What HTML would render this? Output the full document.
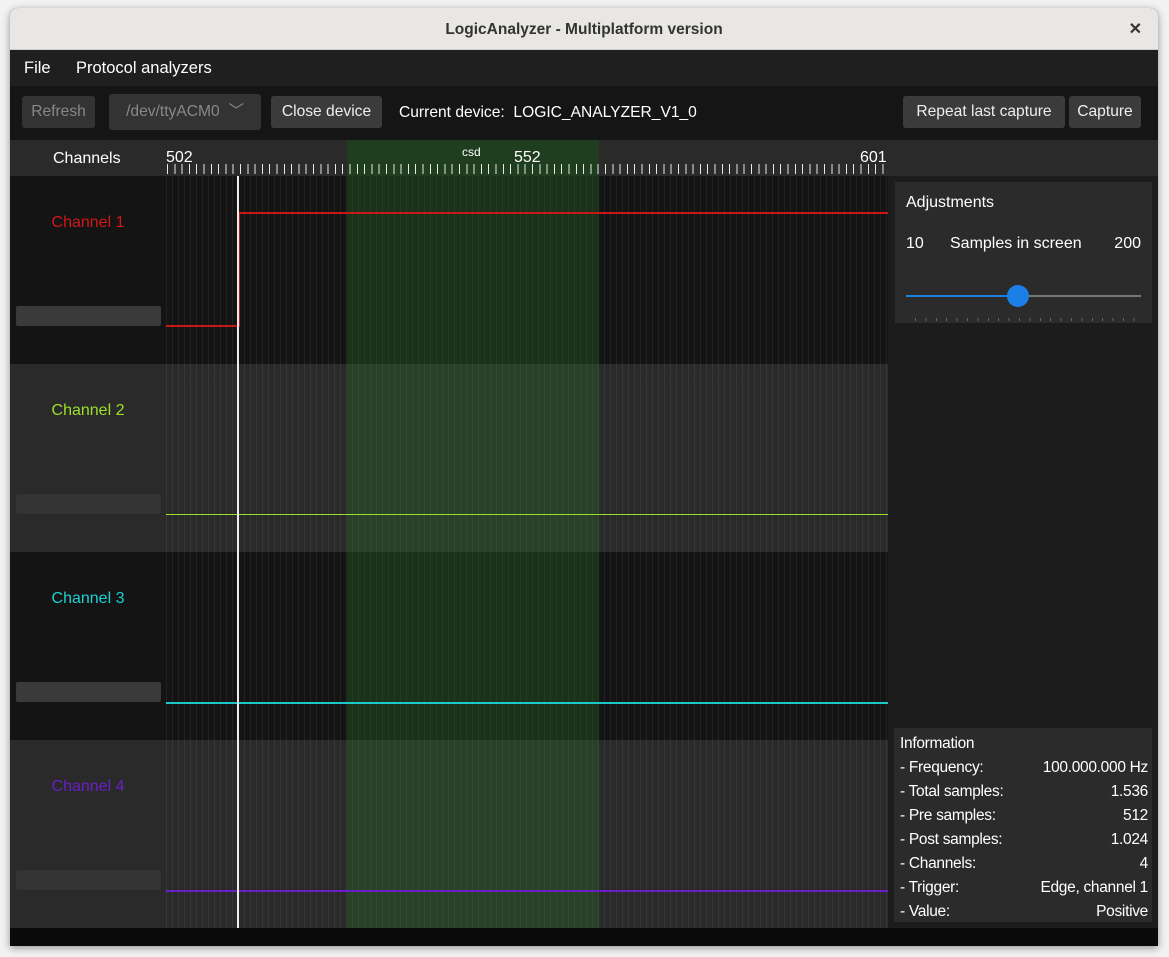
<!DOCTYPE html>
<html><head><meta charset="utf-8"><style>
*{margin:0;padding:0;box-sizing:border-box}
body{width:1169px;height:957px;background:#f2f2f2;font-family:"Liberation Sans",sans-serif;position:relative;overflow:hidden}
.abs{position:absolute}
.win{left:10px;top:8px;width:1148px;height:938px;background:#1c1c1c;border-radius:8px 8px 0 0;overflow:hidden;box-shadow:0 2px 8px rgba(0,0,0,.4)}
.title{left:0;top:0;width:1148px;height:42px;background:#e9e7e4;border-bottom:1px solid #cfcdca;text-align:center;line-height:44px;font-weight:bold;font-size:15.5px;color:#333}
.menu{top:42px;left:0;width:1148px;height:36px;background:#1f1f1f;color:#fff;font-size:16.5px}
.tb{top:78px;left:0;width:1148px;height:54px;background:#151515;color:#fff;font-size:15.6px}
.btn{background:#3b3b3b;border-radius:3px;height:32px;line-height:32px;text-align:center;color:#eee;top:10px;white-space:nowrap}
.ruler{top:132px;left:0;width:1148px;height:36px;background:#2a2a2a;color:#fff;font-size:16px}
.row{left:0;width:878px;height:188px}
.lab{left:0;width:156px;text-align:center;font-size:16px;top:38px}
.bar{left:6px;width:145px;height:20px;top:130px;background:#3a3a3a;border-radius:2px}
.grid{left:156px;top:0;width:722px;height:188px;background-image:repeating-linear-gradient(90deg,rgba(255,255,255,.06) 0 1px,transparent 1px 6px);}
.info div{display:flex;justify-content:space-between;height:24px;line-height:24px}
</style></head><body>
<div class="abs win">
 <div class="abs title">LogicAnalyzer - Multiplatform version<span class="abs" style="right:16px;top:0;font-size:16px">✕</span></div>
 <div class="abs menu"><span class="abs" style="left:14px;top:9px">File</span><span class="abs" style="left:66px;top:9px">Protocol analyzers</span></div>
 <div class="abs tb">
  <div class="abs btn" style="left:12px;width:73px;color:#888;background:#333">Refresh</div>
  <div class="abs btn" style="left:99px;width:152px;color:#888;background:#333;top:8px;height:36px;line-height:36px">/dev/ttyACM0 &nbsp;﹀</div>
  <div class="abs btn" style="left:261px;width:111px">Close device</div>
  <span class="abs" style="left:389px;top:18px">Current device:&nbsp; LOGIC_ANALYZER_V1_0</span>
  <div class="abs btn" style="left:893px;width:162px">Repeat last capture</div>
  <div class="abs btn" style="left:1059px;width:72px">Capture</div>
 </div>
 <div class="abs ruler">
  <span class="abs" style="left:43px;top:10px">Channels</span>
  <div class="abs" style="left:337px;top:0;width:252px;height:36px;background:#1f3d1f"></div>
  <span class="abs" style="left:156px;top:9px">502</span>
  <span class="abs" style="left:452px;top:5px;font-size:12px">csd</span>
  <span class="abs" style="left:504px;top:9px">552</span>
  <span class="abs" style="left:850px;top:9px">601</span>
  <div class="abs" style="left:157px;top:24px;width:721px;height:10px;background-image:repeating-linear-gradient(90deg,#e8e8e8 0 1px,transparent 1px 7.3px)"></div>
 </div>
 <div class="abs row" style="top:168px;background:#141414"><div class="abs grid"></div><div class="abs lab" style="color:#d01818">Channel 1</div><div class="abs bar"></div></div>
 <div class="abs row" style="top:356px;background:#2a2a2a"><div class="abs grid"></div><div class="abs lab" style="color:#9be02a">Channel 2</div><div class="abs bar" style="background:#333"></div></div>
 <div class="abs row" style="top:544px;background:#141414"><div class="abs grid"></div><div class="abs lab" style="color:#1fd0d0">Channel 3</div><div class="abs bar"></div></div>
 <div class="abs row" style="top:732px;background:#2a2a2a"><div class="abs grid"></div><div class="abs lab" style="color:#6a1ec8">Channel 4</div><div class="abs bar" style="background:#333"></div></div>
 <div class="abs" style="left:337px;top:168px;width:252px;height:752px;background:rgba(40,110,40,.33)"></div>
 <div class="abs" style="left:156px;top:317px;width:72px;height:2px;background:#c81818"></div>
 <div class="abs" style="left:228px;top:204px;width:2px;height:115px;background:#c81818"></div>
 <div class="abs" style="left:228px;top:204px;width:650px;height:2px;background:#c81818"></div>
 <div class="abs" style="left:156px;top:506px;width:722px;height:1px;background:#9be02a"></div>
 <div class="abs" style="left:156px;top:694px;width:722px;height:2px;background:#1fc8c8"></div>
 <div class="abs" style="left:156px;top:882px;width:722px;height:2px;background:#6a1ec8"></div>
 <div class="abs" style="left:227px;top:168px;width:2px;height:752px;background:#eee"></div>
 <div class="abs" style="left:885px;top:174px;width:257px;height:141px;background:#2b2b2b;color:#fff;font-size:16px">
  <span class="abs" style="left:11px;top:12px">Adjustments</span>
  <span class="abs" style="left:11px;top:53px">10</span>
  <span class="abs" style="left:55px;top:53px">Samples in screen</span>
  <span class="abs" style="right:11px;top:53px">200</span>
  <div class="abs" style="left:11px;top:113px;width:112px;height:2px;background:#1f7fe0"></div>
  <div class="abs" style="left:123px;top:113px;width:123px;height:2px;background:#777"></div>
  <div class="abs" style="left:112px;top:103px;width:22px;height:22px;border-radius:50%;background:#1a80e8"></div>
  <div class="abs" style="left:20px;top:136px;width:220px;height:3px;background-image:repeating-linear-gradient(90deg,#666 0 1px,transparent 1px 10.4px)"></div>
 </div>
 <div class="abs info" style="left:884px;top:720px;width:258px;height:194px;background:#2b2b2b;color:#fff;font-size:15.5px;padding:4px 4px 0 6px;letter-spacing:-.3px">
  <div>Information</div>
  <div><span>- Frequency:</span><span>100.000.000 Hz</span></div>
  <div><span>- Total samples:</span><span>1.536</span></div>
  <div><span>- Pre samples:</span><span>512</span></div>
  <div><span>- Post samples:</span><span>1.024</span></div>
  <div><span>- Channels:</span><span>4</span></div>
  <div><span>- Trigger:</span><span>Edge, channel 1</span></div>
  <div><span>- Value:</span><span>Positive</span></div>
 </div>
 <div class="abs" style="left:0;top:920px;width:1148px;height:18px;background:#0a0a0a"></div>
</div>
</body></html>
